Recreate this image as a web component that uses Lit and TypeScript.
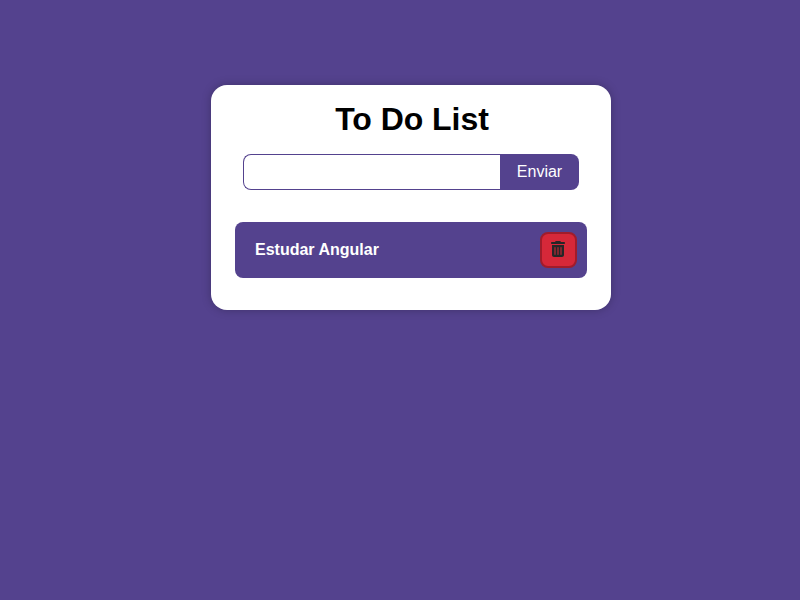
import { LitElement, html, css } from "lit";
import { customElement, state } from "lit/decorators.js";

@customElement("app-root")
export class AppRoot extends LitElement {
  static styles = css`
    :host {
      display: flex;
      justify-content: center;
      align-items: flex-start;
      box-sizing: border-box;
      height: 600px;
      padding: 85px 0 0 22px;
      overflow: hidden;
      background: #54428e;
      font-family: "Liberation Sans", Arial, sans-serif;
    }
    .card {
      box-sizing: border-box;
      width: 400px;
      height: 225px;
      padding: 16px 24px 32px;
      border-radius: 16px;
      background: #fff;
      box-shadow: 0 0 10px rgba(0, 0, 0, 0.25);
    }
    .title {
      margin: 0 0 16px;
      padding-left: 2px;
      font-size: 32px;
      letter-spacing: -0.05px;
      line-height: 37px;
      text-align: center;
      color: #000;
    }
    .form {
      display: flex;
      height: 36px;
      margin: 0 8px 32px;
    }
    .field {
      box-sizing: border-box;
      flex: 1;
      min-width: 0;
      padding: 0 8px;
      border: 1px solid #54428e;
      border-right: 0;
      border-radius: 8px 0 0 8px;
      background: #fff;
      font: 16px "Liberation Sans", Arial, sans-serif;
      outline: none;
    }
    .send {
      width: 79px;
      padding: 0;
      border: 0;
      border-radius: 0 8px 8px 0;
      background: #54428e;
      color: #fff;
      font: 16px "Liberation Sans", Arial, sans-serif;
    }
    .item {
      box-sizing: border-box;
      display: flex;
      align-items: center;
      justify-content: space-between;
      height: 56px;
      padding: 0 10px 0 20px;
      border-radius: 8px;
      background: #54428e;
      color: #fff;
      font-size: 16px;
      font-weight: bold;
    }
    .remove {
      box-sizing: border-box;
      display: flex;
      align-items: center;
      justify-content: center;
      width: 37px;
      height: 36px;
      padding: 0 1px 2px 0;
      border: 2px solid #a01c2b;
      border-radius: 8px;
      background: #d62839;
      color: #252627;
    }
    .trash {
      display: block;
      width: 14px;
      height: 16px;
    }
  `;

  @state() private tasks = ["Estudar Angular"];

  render() {
    return html`
      <main class="card">
        <h1 class="title">To Do List</h1>
        <div class="form">
          <input class="field" type="text" />
          <button class="send">Enviar</button>
        </div>
        ${this.tasks.map(
          (task) => html`
            <div class="item">
              <span>${task}</span>
              <button class="remove">
                <svg class="trash" viewBox="0 0 448 512" fill="currentColor">
                  <path
                    d="M135.2 17.7C140.6 6.8 151.7 0 163.8 0H284.2c12.1 0 23.2 6.8 28.6 17.7L320 32h96c17.7 0 32 14.3 32 32s-14.3 32-32 32H32C14.3 96 0 81.7 0 64S14.3 32 32 32h96l7.2-14.3zM32 128H416V448c0 35.3-28.7 64-64 64H96c-35.3 0-64-28.7-64-64V128zm96 64c-8.8 0-16 7.2-16 16V432c0 8.8 7.2 16 16 16s16-7.2 16-16V208c0-8.8-7.2-16-16-16zm96 0c-8.8 0-16 7.2-16 16V432c0 8.8 7.2 16 16 16s16-7.2 16-16V208c0-8.8-7.2-16-16-16zm96 0c-8.8 0-16 7.2-16 16V432c0 8.8 7.2 16 16 16s16-7.2 16-16V208c0-8.8-7.2-16-16-16z"
                  />
                </svg>
              </button>
            </div>
          `
        )}
      </main>
    `;
  }
}
